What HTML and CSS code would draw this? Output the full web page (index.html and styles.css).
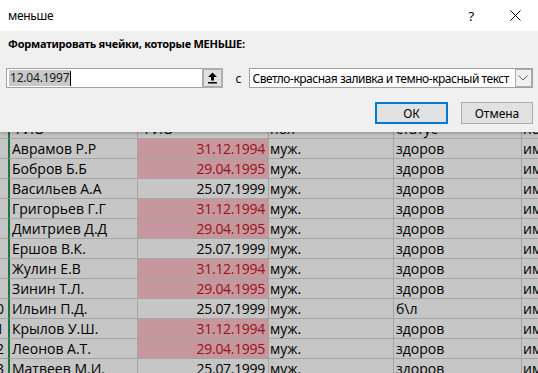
FILE: index.html
```html
<!DOCTYPE html>
<html>
<head>
<meta charset="utf-8">
<link rel="stylesheet" href="styles.css">
</head>
<body>
<div class="screen">
  <div class="sheet">
    <div class="row head">
      <div class="rh"><span>1</span></div>
      <div class="c a">ФИО</div>
      <div class="c b hd">ФИО</div>
      <div class="c d">пол</div>
      <div class="c e">статус</div>
      <div class="c f">полис</div>
    </div>
    <div class="row">
      <div class="rh"><span>2</span></div>
      <div class="c a">Аврамов Р.Р</div>
      <div class="c b hl">31.12.1994</div>
      <div class="c d">муж.</div>
      <div class="c e">здоров</div>
      <div class="c f">имеется</div>
    </div>
    <div class="row">
      <div class="rh"><span>3</span></div>
      <div class="c a">Бобров Б.Б</div>
      <div class="c b hl">29.04.1995</div>
      <div class="c d">муж.</div>
      <div class="c e">здоров</div>
      <div class="c f">имеется</div>
    </div>
    <div class="row">
      <div class="rh"><span>4</span></div>
      <div class="c a">Васильев А.А</div>
      <div class="c b">25.07.1999</div>
      <div class="c d">муж.</div>
      <div class="c e">здоров</div>
      <div class="c f">имеется</div>
    </div>
    <div class="row">
      <div class="rh"><span>5</span></div>
      <div class="c a">Григорьев Г.Г</div>
      <div class="c b hl">31.12.1994</div>
      <div class="c d">муж.</div>
      <div class="c e">здоров</div>
      <div class="c f">имеется</div>
    </div>
    <div class="row">
      <div class="rh"><span>6</span></div>
      <div class="c a">Дмитриев Д.Д</div>
      <div class="c b hl">29.04.1995</div>
      <div class="c d">муж.</div>
      <div class="c e">здоров</div>
      <div class="c f">имеется</div>
    </div>
    <div class="row">
      <div class="rh"><span>7</span></div>
      <div class="c a">Ершов В.К.</div>
      <div class="c b">25.07.1999</div>
      <div class="c d">муж.</div>
      <div class="c e">здоров</div>
      <div class="c f">имеется</div>
    </div>
    <div class="row">
      <div class="rh"><span>8</span></div>
      <div class="c a">Жулин Е.В</div>
      <div class="c b hl">31.12.1994</div>
      <div class="c d">муж.</div>
      <div class="c e">здоров</div>
      <div class="c f">имеется</div>
    </div>
    <div class="row">
      <div class="rh"><span>9</span></div>
      <div class="c a">Зинин Т.Л.</div>
      <div class="c b hl">29.04.1995</div>
      <div class="c d">муж.</div>
      <div class="c e">здоров</div>
      <div class="c f">имеется</div>
    </div>
    <div class="row">
      <div class="rh"><span>10</span></div>
      <div class="c a">Ильин П.Д.</div>
      <div class="c b">25.07.1999</div>
      <div class="c d">муж.</div>
      <div class="c e">б\л</div>
      <div class="c f">имеется</div>
    </div>
    <div class="row">
      <div class="rh"><span>11</span></div>
      <div class="c a">Крылов У.Ш.</div>
      <div class="c b hl">31.12.1994</div>
      <div class="c d">муж.</div>
      <div class="c e">здоров</div>
      <div class="c f">имеется</div>
    </div>
    <div class="row">
      <div class="rh"><span>12</span></div>
      <div class="c a">Леонов А.Т.</div>
      <div class="c b hl">29.04.1995</div>
      <div class="c d">муж.</div>
      <div class="c e">здоров</div>
      <div class="c f">имеется</div>
    </div>
    <div class="row">
      <div class="rh"><span>13</span></div>
      <div class="c a">Матвеев М.И.</div>
      <div class="c b">25.07.1999</div>
      <div class="c d">муж.</div>
      <div class="c e">здоров</div>
      <div class="c f">имеется</div>
    </div>
  </div>

  <div class="dialog">
    <div class="titlebar">
      <span class="title">меньше</span>
      <span class="help">?</span>
      <span class="close">
        <svg width="11" height="11" viewBox="0 0 11 11"><path d="M0.5 0.5 L10.5 10.5 M10.5 0.5 L0.5 10.5" stroke="#000" stroke-width="1" fill="none"/></svg>
      </span>
    </div>
    <div class="dbody">
      <div class="label">Форматировать ячейки, которые МЕНЬШЕ:</div>
      <div class="inputs">
        <div class="field">
          <span class="sel">12.04.1997</span><span class="caret"></span>
        </div>
        <div class="refbtn">
          <svg width="11" height="12" viewBox="0 0 11 12"><path d="M5.5 0.5 L10 5 L7 5 L7 8.5 L4 8.5 L4 5 L1 5 Z" fill="#000"/><rect x="1" y="10" width="9" height="1.5" fill="#000"/></svg>
        </div>
        <span class="with">с</span>
        <div class="combo">
          <span class="combo-text">Светло-красная заливка и темно-красный текст</span>
          <span class="combo-arrow">
            <svg width="10" height="6" viewBox="0 0 10 6"><path d="M0.5 0.5 L5 5 L9.5 0.5" stroke="#606060" stroke-width="1" fill="none"/></svg>
          </span>
        </div>
      </div>
      <div class="buttons">
        <button class="btn ok">ОК</button>
        <button class="btn">Отмена</button>
      </div>
    </div>
  </div>
</div>
</body>
</html>
```

FILE: styles.css
```css
* { box-sizing: border-box; }
html, body { margin: 0; padding: 0; }
body { width: 538px; height: 373px; overflow: hidden; background: #c6c6c6; }

.screen { position: relative; width: 538px; height: 373px; overflow: hidden; }

/* spreadsheet */
.sheet {
  padding-top: 119px;
  font-family: "Open Sans", "Noto Sans", sans-serif;
  font-size: 14px;
  color: #000;
}
.row {
  display: grid;
  grid-template-columns: 8px 130px 131px 125px 128px 1fr;
  height: 20px;
}
.c, .rh {
  height: 20px;
  line-height: 19px;
  border-bottom: 1px solid #a5a5a5;
  white-space: nowrap;
  overflow: hidden;
  background: #c6c6c6;
}
.c { border-right: 1px solid #a5a5a5; }
.rh { position: relative; }
.rh span {
  position: absolute;
  left: -17px;
  width: 26px;
  text-align: center;
  font-size: 14px;
}
.a { border-left: 2px solid #217346; padding-left: 2px; }
.b { text-align: right; padding-right: 3px; letter-spacing: -0.3px; }
.b.hd { text-align: left; padding-left: 3px; letter-spacing: 0; }
.d { padding-left: 1px; }
.e { padding-left: 2px; }
.f { padding-left: 1px; border-right: none; }
.hl { background: #c6989d; color: #98101a; }

/* dialog */
.dialog {
  position: absolute;
  left: 0;
  top: 0;
  width: 538px;
  height: 132px;
  background: #f0f0f0;
  box-shadow: 0 1px 4px rgba(0,0,0,0.3);
  font-family: "Noto Sans", "Open Sans", sans-serif;
  font-size: 11px;
  letter-spacing: -0.2px;
  color: #000;
}
.titlebar {
  height: 31px;
  background: #fff;
  display: flex;
  align-items: center;
  padding-left: 8px;
}
.title { font-size: 12px; letter-spacing: -0.3px; padding-bottom: 1px; }
.help { margin-left: auto; font-size: 13px; margin-right: 36px; }
.close { display: flex; margin-right: 17px; }

.dbody { padding: 5px 5px 0 6px; }
.label { font-weight: bold; padding-left: 2px; line-height: 16px; letter-spacing: -0.25px; }
.inputs {
  display: flex;
  align-items: center;
  margin-top: 16px;
  height: 20px;
}
.field {
  width: 196px;
  height: 20px;
  background: #fff;
  border: 1px solid #a0a0a0;
  border-right: none;
  display: flex;
  align-items: center;
  padding-left: 2px;
}
.sel { background: #c8c8c8; color: #1a1a1a; line-height: 16px; padding: 0 1px; font-size: 12px; }
.caret { width: 1px; height: 15px; background: #000; }
.refbtn {
  width: 21px;
  height: 20px;
  background: #e1e1e1;
  border: 2px solid #adadad;
  display: flex;
  align-items: center;
  justify-content: center;
}
.with { margin-left: 13px; width: 13px; font-size: 12px; }
.combo {
  width: 285px;
  height: 20px;
  background: #fff;
  border: 1px solid #a0a0a0;
  display: flex;
  align-items: center;
  padding-left: 3px;
  font-size: 12px;
  letter-spacing: -0.48px;
}
.combo-text { flex: 1; white-space: nowrap; overflow: hidden; }
.combo-arrow {
  width: 17px;
  height: 18px;
  background: #f0f0f0;
  border: 1px solid #adadad;
  display: flex;
  align-items: center;
  justify-content: center;
}
.buttons {
  display: flex;
  justify-content: flex-end;
  gap: 13px;
  margin-top: 14px;
}
.btn {
  width: 72px;
  height: 22px;
  background: #e1e1e1;
  border: 1px solid #adadad;
  font-family: "Noto Sans", "Open Sans", sans-serif;
  font-size: 12px;
  color: #000;
  padding: 0;
  margin: 0;
}
.btn.ok { width: 73px; border: 2px solid #0078d7; }
```
